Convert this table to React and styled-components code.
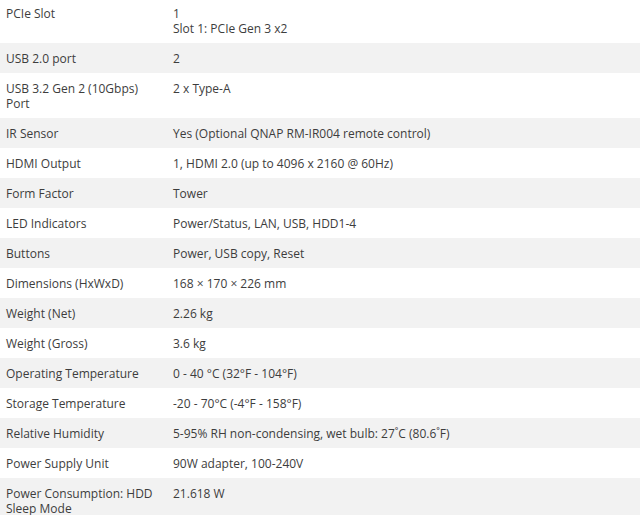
import React from 'react'
import styled, { createGlobalStyle } from 'styled-components'

const GlobalStyle = createGlobalStyle`
  body {
    margin: 0;
    background: #fff;
    font-family: "Open Sans", "Noto Sans", sans-serif;
  }
`

const SpecTable = styled.div`
  width: 640px;
  margin-top: -2px;
  color: #3d3d3d;
  font-size: 12px;
  line-height: 15px;
`

const Row = styled.div`
  display: grid;
  grid-template-columns: 167px 1fr;
  padding: 7.5px 0;
  background: ${p => (p.$shaded ? '#f2f2f2' : '#fff')};
`

const Label = styled.div`
  padding: 0 6px;
`

const Value = styled.div`
  padding: 0 6px;
`

const specs = [
  ['PCIe Slot', ['1', 'Slot 1: PCIe Gen 3 x2']],
  ['USB 2.0 port', ['2']],
  ['USB 3.2 Gen 2 (10Gbps) Port', ['2 x Type-A']],
  ['IR Sensor', ['Yes (Optional QNAP RM-IR004 remote control)']],
  ['HDMI Output', ['1, HDMI 2.0 (up to 4096 x 2160 @ 60Hz)']],
  ['Form Factor', ['Tower']],
  ['LED Indicators', ['Power/Status, LAN, USB, HDD1-4']],
  ['Buttons', ['Power, USB copy, Reset']],
  ['Dimensions (HxWxD)', ['168 × 170 × 226 mm']],
  ['Weight (Net)', ['2.26 kg']],
  ['Weight (Gross)', ['3.6 kg']],
  ['Operating Temperature', ['0 - 40 °C (32°F - 104°F)']],
  ['Storage Temperature', ['-20 - 70°C (-4°F - 158°F)']],
  ['Relative Humidity', ['5-95% RH non-condensing, wet bulb: 27˚C (80.6˚F)']],
  ['Power Supply Unit', ['90W adapter, 100-240V']],
  ['Power Consumption: HDD Sleep Mode', ['21.618 W']],
]

export default function App() {
  return (
    <>
      <GlobalStyle />
      <SpecTable>
        {specs.map(([label, lines], i) => (
          <Row key={label} $shaded={i % 2 === 1}>
            <Label>{label}</Label>
            <Value>
              {lines.map(l => (
                <div key={l}>{l}</div>
              ))}
            </Value>
          </Row>
        ))}
      </SpecTable>
    </>
  )
}
